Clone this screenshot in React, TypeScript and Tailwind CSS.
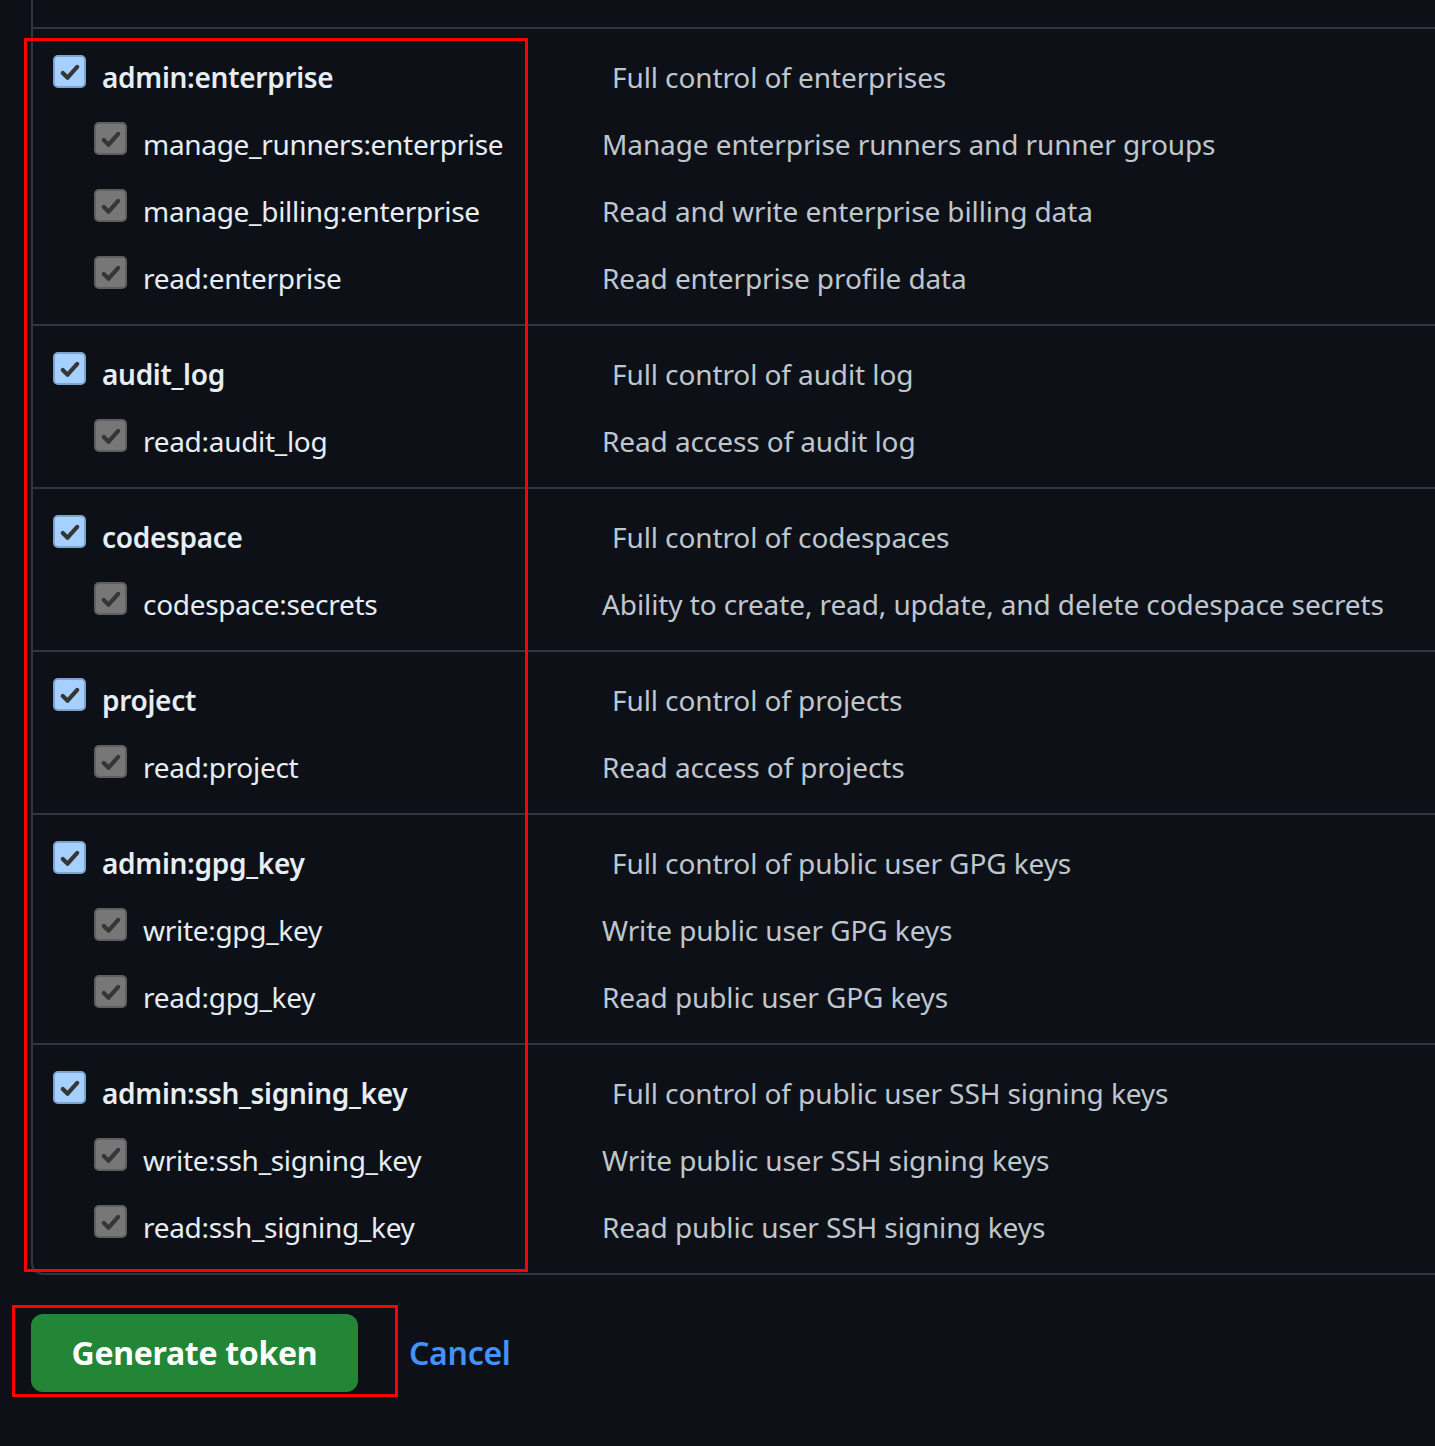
import React from 'react';

interface Scope {
  name: string;
  desc: string;
}

interface ScopeGroup {
  parent: Scope;
  children: Scope[];
}

const groups: ScopeGroup[] = [
  {
    parent: { name: 'admin:enterprise', desc: 'Full control of enterprises' },
    children: [
      { name: 'manage_runners:enterprise', desc: 'Manage enterprise runners and runner groups' },
      { name: 'manage_billing:enterprise', desc: 'Read and write enterprise billing data' },
      { name: 'read:enterprise', desc: 'Read enterprise profile data' },
    ],
  },
  {
    parent: { name: 'audit_log', desc: 'Full control of audit log' },
    children: [{ name: 'read:audit_log', desc: 'Read access of audit log' }],
  },
  {
    parent: { name: 'codespace', desc: 'Full control of codespaces' },
    children: [
      { name: 'codespace:secrets', desc: 'Ability to create, read, update, and delete codespace secrets' },
    ],
  },
  {
    parent: { name: 'project', desc: 'Full control of projects' },
    children: [{ name: 'read:project', desc: 'Read access of projects' }],
  },
  {
    parent: { name: 'admin:gpg_key', desc: 'Full control of public user GPG keys' },
    children: [
      { name: 'write:gpg_key', desc: 'Write public user GPG keys' },
      { name: 'read:gpg_key', desc: 'Read public user GPG keys' },
    ],
  },
  {
    parent: { name: 'admin:ssh_signing_key', desc: 'Full control of public user SSH signing keys' },
    children: [
      { name: 'write:ssh_signing_key', desc: 'Write public user SSH signing keys' },
      { name: 'read:ssh_signing_key', desc: 'Read public user SSH signing keys' },
    ],
  },
];

const CheckMark: React.FC = () => (
  <svg viewBox="0 0 16 16" className="w-[24px] h-[24px]" fill="none">
    <path d="M3.2 8.6 L6.4 11.8 L12.8 4.6" stroke="#363636" strokeWidth="2.8" strokeLinecap="round" strokeLinejoin="round" />
  </svg>
);

// Parent boxes are the live (blue) ones, children are disabled (gray)
const Checkbox: React.FC<{ disabled?: boolean }> = ({ disabled }) => (
  <span
    className={`flex items-center justify-center w-[33px] h-[33px] shrink-0 rounded-[5px] border-2 -mt-[10px] ${
      disabled ? 'bg-[#777777] border-[#5f5f5f]' : 'bg-[#a6d0ff] border-[#7ea3cc]'
    }`}
  >
    <CheckMark />
  </span>
);

const ScopeRow: React.FC<{ scope: Scope; child?: boolean }> = ({ scope, child }) => (
  <div className="flex items-center h-[67px]">
    <div className={`flex items-center w-[570px] shrink-0 ${child ? 'pl-[61px]' : 'pl-[20px]'}`}>
      <Checkbox disabled={child} />
      <span
        className={`ml-[16px] text-[28px] tracking-[-0.3px] whitespace-nowrap ${
          child ? 'text-[#e6edf3]' : 'text-[#e6edf3] font-semibold'
        }`}
      >
        {scope.name}
      </span>
    </div>
    <span className={`text-[28px] text-[#bfc6ce] whitespace-nowrap tracking-[-0.1px] ${child ? '-ml-[1px]' : 'ml-[9px]'}`}>
      {scope.desc}
    </span>
  </div>
);

export default function App() {
  return (
    <div
      className="relative w-full min-h-[1446px] bg-[#0d1117] overflow-hidden"
      style={{ fontFamily: '"Noto Sans", "Open Sans", sans-serif' }}
    >
      <div className="ml-[31px] pt-[27px] border-l-2 border-b-2 border-[#30363d] rounded-bl-[12px]">
        {groups.map((g) => (
          <div key={g.parent.name} className="border-t-2 border-[#30363d] pt-[14px] pb-[13px]">
            <ScopeRow scope={g.parent} />
            {g.children.map((c) => (
              <ScopeRow key={c.name} scope={c} child />
            ))}
          </div>
        ))}
      </div>

      <div className="flex items-center pl-[31px] pt-[39px]">
        <button className="w-[327px] h-[78px] rounded-[12px] bg-[#238636] text-white text-[32px] font-bold tracking-[-0.3px]">
          Generate token
        </button>
        <a className="ml-[51px] text-[32px] font-semibold text-[#4493f8] tracking-[-0.3px]">Cancel</a>
      </div>

      {/* red annotation boxes */}
      <div className="absolute left-[24px] top-[38px] w-[504px] h-[1234px] border-[3px] border-[#ff0000] pointer-events-none" />
      <div className="absolute left-[12px] top-[1305px] w-[386px] h-[92px] border-[3px] border-[#ff0000] pointer-events-none" />
    </div>
  );
}
